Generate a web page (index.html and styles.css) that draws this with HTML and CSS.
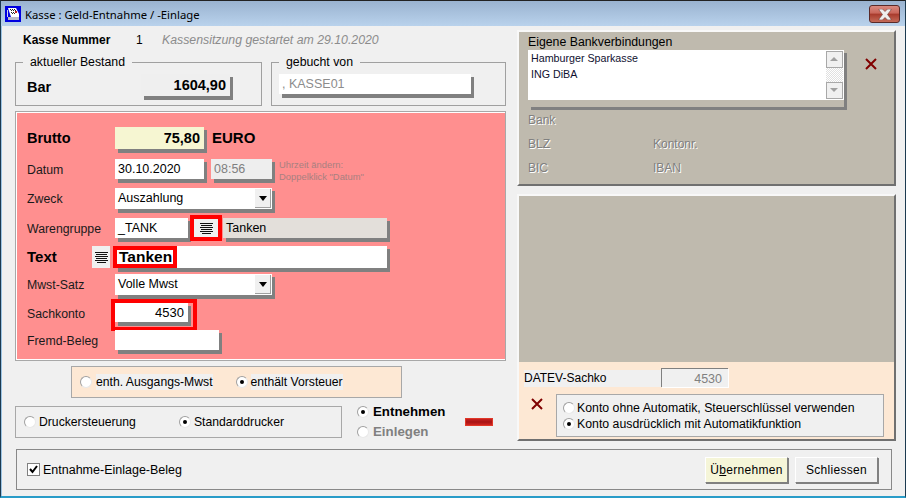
FILE: index.html
```html
<!DOCTYPE html>
<html lang="de">

<head>
    <meta charset="utf-8">
    <title>Kasse : Geld-Entnahme / -Einlage</title>
    <link rel="stylesheet" href="styles.css">
</head>

<body>

    <div class="fenster">

        <header class="titel">
            <svg class="titelicon" width="16" height="16" viewBox="0 0 16 16">
                <rect width="16" height="16" fill="#0000e0" />
                <path d="M3 2h8l3 6v3H6z" fill="#fff" />
                <path d="M5 3h1v1H5zM7 3h1v1H7zM9 3h1v1H9zM6 4h1v1H6zM8 4h1v1H8zM10 4h1v1h-1zM6 6h1v1H6zM8 6h1v1H8zM7 7h1v1H7zM9 7h1v1H9z" fill="#222" />
                <path d="M10 5h2v2h-2z" fill="#c02020" />
                <path d="M3 11h11v3H3z" fill="#b8b8c8" />
                <path d="M2 4h1v7H2z" fill="#d0d0e8" />
            </svg>
            <span>Kasse : Geld-Entnahme / -Einlage</span>
            <div class="schliessenX">
                <svg width="16" height="11" viewBox="0 0 16 11">
                    <path d="M2 0h3.500l2.500 2.500 2.500-2.500h3.500v1l-3.500 4.500 3.500 4.500v1h-3.500l-2.500-2.500-2.500 2.500h-3.500v-1l3.500-4.500-3.500-4.500z" fill="#eee" stroke="#6a3a38" stroke-width=".6" />
                </svg>
            </div>
        </header>

        <main class="inhalt">

            <section class="links">
                <div class="kassezeile">
                    <b class="kassenummer">Kasse Nummer</b>
                    <span class="kassewert">1</span>
                    <i class="sitzung">Kassensitzung gestartet am 29.10.2020</i>
                </div>

                <div class="gruppen">
                    <fieldset class="gruppe bestand">
                        <legend>aktueller Bestand</legend>
                        <b class="barlabel">Bar</b>
                        <div class="felt barfelt">1604,90</div>
                    </fieldset>
                    <fieldset class="gruppe gebucht">
                        <legend>gebucht von</legend>
                        <div class="felt kassefelt">, KASSE01</div>
                    </fieldset>
                </div>

                <div class="rotpanel">
                    <b class="label stor">Brutto</b>
                    <div class="raekke">
                        <div class="felt bruttofelt">75,80</div>
                        <b class="euro">EURO</b>
                    </div>

                    <span class="label">Datum</span>
                    <div class="raekke">
                        <div class="felt datofelt">30.10.2020</div>
                        <div class="felt tidfelt">08:56</div>
                        <div class="hint">Uhrzeit ändern:<br>Doppelklick "Datum"</div>
                    </div>

                    <span class="label">Zweck</span>
                    <div class="raekke">
                        <div class="felt combo"><span>Auszahlung</span><span class="pil"></span></div>
                    </div>

                    <span class="label">Warengruppe</span>
                    <div class="raekke">
                        <div class="felt tankfelt">_TANK</div>
                        <div class="listeknap rodramme">
                            <svg class="linjer" width="13" height="11" viewBox="0 0 13 11"><path d="M0 .5h13M1 2.500h11M0 4.500h13M1 6.500h11M0 8.500h13M2 10.500h9" stroke="#111" /></svg>
                        </div>
                        <div class="felt tankennavn">Tanken</div>
                    </div>

                    <div class="textlabel">
                        <b class="label stor textord">Text</b>
                        <div class="listeknap">
                            <svg class="linjer" width="13" height="11" viewBox="0 0 13 11"><path d="M0 .5h13M1 2.500h11M0 4.500h13M1 6.500h11M0 8.500h13M2 10.500h9" stroke="#111" /></svg>
                        </div>
                    </div>
                    <div class="raekke">
                        <div class="felt textfelt"><b class="rodtekst">Tanken</b></div>
                    </div>

                    <span class="label">Mwst-Satz</span>
                    <div class="raekke">
                        <div class="felt combo"><span>Volle Mwst</span><span class="pil"></span></div>
                    </div>

                    <span class="label">Sachkonto</span>
                    <div class="raekke">
                        <div class="kontoramme">
                            <div class="felt kontofelt">4530</div>
                        </div>
                    </div>

                    <span class="label">Fremd-Beleg</span>
                    <div class="raekke">
                        <div class="felt fremdfelt"></div>
                    </div>
                </div>

                <div class="mwstboks">
                    <label class="valg"><span class="radio"></span><span class="graabg">enth. Ausgangs-Mwst</span></label>
                    <label class="valg tat"><span class="radio valgt"></span><span class="graabg">enthält Vorsteuer</span></label>
                </div>

                <div class="bundraekke">
                    <div class="druckerboks">
                        <label class="valg"><span class="radio"></span>Druckersteuerung</label>
                        <label class="valg"><span class="radio valgt"></span>Standarddrucker</label>
                    </div>
                    <div class="retning">
                        <label class="valg fed"><span class="radio valgt"></span>Entnehmen</label>
                        <label class="valg fed inaktiv"><span class="radio"></span>Einlegen</label>
                    </div>
                    <div class="rodbar"></div>
                </div>
            </section>

            <section class="hojre">
                <div class="bankpanel">
                    <div class="bankoverskrift">Eigene Bankverbindungen</div>
                    <div class="bankliste">
                        <div class="listewrap">
                            <div class="liste">
                                <div class="listetekst">
                                    <div>Hamburger Sparkasse</div>
                                    <div>ING DiBA</div>
                                </div>
                                <div class="scrollbar">
                                    <span class="scrollknap op"></span>
                                    <span class="scrollspor"></span>
                                    <span class="scrollknap ned"></span>
                                </div>
                            </div>
                        </div>
                        <svg class="kryds bankkryds" width="12" height="12" viewBox="0 0 12 12"><path d="M1 1l10 10M11 1L1 11" stroke="#800000" stroke-width="2" /></svg>
                    </div>
                    <div class="bankinfo">
                        <span class="graatekst">Bank</span><span></span>
                        <span class="graatekst">BLZ</span><span class="graatekst">Kontonr.</span>
                        <span class="graatekst">BIC</span><span class="graatekst">IBAN</span>
                    </div>
                </div>

                <div class="datevpanel">
                    <div class="datevtop"></div>
                    <div class="datevbund">
                        <div class="datevraekke">
                            <span class="datevlabel">DATEV-Sachko</span>
                            <div class="datevfelt">4530</div>
                        </div>
                        <div class="automatik">
                            <svg class="kryds" width="12" height="12" viewBox="0 0 12 12"><path d="M1 1l10 10M11 1L1 11" stroke="#800000" stroke-width="2" /></svg>
                            <div class="automatikboks">
                                <label class="valg"><span class="radio"></span>Konto ohne Automatik, Steuerschlüssel verwenden</label>
                                <label class="valg"><span class="radio valgt"></span>Konto ausdrücklich mit Automatikfunktion</label>
                            </div>
                        </div>
                    </div>
                </div>
            </section>

            <footer class="bund">
                <label class="afkryds"><span class="checkboks">
                    <svg width="9" height="9" viewBox="0 0 9 9"><path d="M1 4l2.500 3L8 1" fill="none" stroke="#000" stroke-width="2" /></svg>
                </span>Entnahme-Einlage-Beleg</label>
                <div class="knapper">
                    <button class="knap gul">Ü<u>b</u>ernehmen</button>
                    <button class="knap">Schliessen</button>
                </div>
            </footer>

        </main>
    </div>

</body>

</html>
```

FILE: styles.css
```css
* {
    box-sizing: border-box;
}

body {
    margin: 0;
    background-color: #fff;
    font-family: "Liberation Sans", Arial, sans-serif;
    font-size: 12px;
    color: #000;
    overflow: hidden;
}

.fenster {
    width: 906px;
    height: 498px;
    border: 1px solid #1c3a50;
    border-top-color: #222;
    border-bottom: 2px solid #2a9cc8;
    background-color: #f0f0f0;
    box-shadow: inset 1px 0 0 #9cc4e4;
}

.titel {
    height: 25px;
    display: flex;
    align-items: center;
    padding: 1px 0 0 4px;
    background: linear-gradient(#9ab3d0, #b9d2ec);
    font-family: "Noto Sans", sans-serif;
    font-size: 11.3px;
    color: #000;
}

.titelicon {
    margin-right: 4px;
}

.schliessenX {
    margin-left: auto;
    margin-right: 5px;
    width: 31px;
    height: 18px;
    display: flex;
    align-items: center;
    justify-content: center;
    border: 1px solid #5a2a28;
    border-radius: 3px;
    background: linear-gradient(#d98a80 0, #c9665a 45%, #a83a2c 50%, #c46a58 100%);
}

.inhalt {
    display: grid;
    grid-template-columns: 491px 379px;
    column-gap: 11px;
    padding-left: 14px;
}

/* venstre side */
.kassezeile {
    display: flex;
    align-items: center;
    height: 15px;
    margin-top: 6px;
}

.kassenummer {
    width: 121px;
    padding-left: 8px;
    font-size: 12px;
}

.kassewert {
    width: 26px;
}

.sitzung {
    color: #8c8c8c;
    font-size: 12.3px;
}

.gruppen {
    display: flex;
    gap: 9px;
    margin-top: 8px;
}

.gruppe {
    margin: 0;
    height: 51px;
    padding: 5px 0 0;
    border: 1px solid #a0a0a0;
    display: flex;
    align-items: flex-start;
}

.gruppe legend {
    margin-left: 7px;
    padding: 0 7px;
    font-size: 12.3px;
    line-height: 14px;
}

.bestand {
    width: 247px;
}

.gebucht {
    width: 235px;
}

.barlabel {
    width: 125px;
    padding-left: 11px;
    font-size: 14.5px;
    line-height: 26px;
}

/* gennemsigtig kant giver den lille luft over skyggen */
.felt {
    background-color: #fff;
    background-clip: padding-box;
    border-bottom: 1px solid transparent;
    box-shadow: 3px 3px 0 #808080;
    padding: 0 3px;
    line-height: 20px;
    height: 21px;
    font-size: 12.5px;
}

.barfelt {
    width: 89px;
    height: 23px;
    padding-right: 4px;
    background-color: #efefef;
    text-align: right;
    font-weight: bold;
    font-size: 14.5px;
    line-height: 22px;
}

.kassefelt {
    width: 192px;
    margin-left: 7px;
    color: #8c8c8c;
}

.rotpanel {
    height: 250px;
    margin-top: 5px;
    border: 1px solid #a8a8a8;
    box-shadow: inset 1px 1px 0 #fff, inset 0 -1px 0 #fff;
    background-color: #ff8f8f;
    padding: 15px 0 0 11px;
    display: grid;
    grid-template-columns: 88px 1fr;
    grid-template-rows: 32px 29px 30px 28px 28px 29px 27px auto;
    align-items: start;
}

.label {
    line-height: 23px;
    font-size: 12.3px;
    color: #1a1a1a;
}

.stor {
    font-size: 14.5px;
    line-height: 22px;
    color: #000;
}

.textord {
    font-size: 15px;
}

.raekke {
    display: flex;
    align-items: flex-start;
}

.bruttofelt {
    width: 89px;
    height: 23px;
    padding-right: 4px;
    background-color: #f6f6d2;
    text-align: right;
    font-weight: bold;
    font-size: 14.5px;
    line-height: 22px;
}

.euro {
    margin-left: 8px;
    font-size: 15px;
    line-height: 22px;
}

.datofelt {
    width: 89px;
}

.tidfelt {
    width: 61px;
    margin-left: 7px;
    background-color: #eee;
    color: #808080;
}

.hint {
    margin-left: 7px;
    font-size: 9.4px;
    line-height: 12px;
    color: #a88080;
}

.combo {
    width: 157px;
    height: 22px;
    display: flex;
    justify-content: space-between;
    padding-right: 1px;
}

.pil {
    position: relative;
    width: 16px;
    height: 19px;
    margin-top: 1px;
    background-color: #f0f0f0;
    box-shadow: inset -1px -1px 0 #a0a0a0;
}

.pil::after {
    content: "";
    position: absolute;
    left: 4px;
    top: 7px;
    border: 4px solid transparent;
    border-top: 5px solid #000;
    border-bottom: 0;
}

.tankfelt {
    width: 73px;
}

.listeknap {
    width: 24px;
    height: 20px;
    background-color: #f0f0f0;
    display: flex;
    align-items: center;
    justify-content: center;
}

.rodramme {
    margin: -3px 1px 0 2px;
    width: 32px;
    height: 26px;
    border: 4px solid #f00;
}

.tankennavn {
    width: 164px;
    background-color: #e3dfda;
}

.textlabel {
    display: flex;
    justify-content: space-between;
    padding-right: 5px;
}

.textlabel .listeknap {
    width: 18px;
    height: 22px;
}

.textfelt {
    width: 272px;
    height: 23px;
    line-height: 22px;
    font-size: 15.5px;
    padding: 0;
}

.rodtekst {
    display: inline-block;
    margin-left: -2px;
    width: 64px;
    height: 22px;
    line-height: 14px;
    border: 4px solid #f00;
    padding-left: 2px;
}

.kontoramme {
    margin: -4px 0 0 -4px;
    border: 4px solid #f00;
    padding: 0 5px 4px 0;
}

.kontofelt {
    width: 73px;
    height: 20px;
    line-height: 19px;
    text-align: right;
    padding-right: 4px;
    font-size: 13px;
}

.fremdfelt {
    width: 104px;
}

.mwstboks {
    width: 331px;
    height: 32px;
    margin: 5px 0 0 56px;
    border: 1px solid #a8a8a8;
    background-color: #fde8d4;
    display: flex;
    align-items: center;
    padding-left: 8px;
    gap: 23px;
}

.valg {
    display: flex;
    align-items: center;
    gap: 4px;
    font-size: 12.2px;
}

.tat {
    gap: 3px;
}

.graabg {
    background-color: #f0f0f0;
    padding: 1px 0;
}

.radio {
    position: relative;
    display: inline-block;
    flex: none;
    width: 12px;
    height: 12px;
    border-radius: 50%;
    border: 1px solid #a0a0a0;
    border-right-color: #e8e8e8;
    border-bottom-color: #e8e8e8;
    background-color: #fff;
}

.valgt::after {
    content: "";
    position: absolute;
    left: 3px;
    top: 3px;
    width: 4px;
    height: 4px;
    border-radius: 50%;
    background-color: #000;
}

.bundraekke {
    display: flex;
    margin-top: 8px;
}

.druckerboks {
    width: 327px;
    height: 32px;
    border: 1px solid #a8a8a8;
    display: flex;
    align-items: center;
    padding-left: 8px;
    gap: 43px;
}

.druckerboks .valg {
    gap: 3px;
}

.retning {
    display: flex;
    flex-direction: column;
    margin: -2px 0 0 15px;
    gap: 5px;
}

.fed {
    font-weight: bold;
    font-size: 13.3px;
    gap: 4px;
}

.inaktiv {
    color: #808080;
}

.rodbar {
    width: 28px;
    height: 8px;
    margin: 12px 0 0 20px;
    border: 1px solid #e03828;
    background: linear-gradient(#c82020, #a81414 50%, #d02420);
}

/* hojre side */
.hojre {
    margin-top: 4px;
}

.bankpanel {
    height: 156px;
    background-color: #bfbaae;
    border: 2px solid #f8f8f8;
    border-right-color: #707070;
    border-bottom-color: #707070;
    padding: 3px 0 0 9px;
}

.bankoverskrift {
    line-height: 15px;
    font-size: 12.3px;
}

.bankliste {
    display: flex;
    align-items: flex-start;
}

.listewrap {
    width: 316px;
    height: 57px;
    background-color: #bfbaae;
    box-shadow: 3px 3px 0 #808080;
}

.liste {
    height: 50px;
    background-color: #fff;
    display: flex;
    justify-content: space-between;
    font-size: 10.7px;
}

.listetekst {
    padding: 0 0 0 3px;
    line-height: 16px;
    color: #101030;
}

.scrollbar {
    width: 18px;
    display: flex;
    flex-direction: column;
    padding: 1px 1px 1px 0;
}

.scrollknap {
    position: relative;
    height: 17px;
    border: 1px solid #a8a8a8;
    background-color: #f0f0f0;
}

.scrollknap::after {
    content: "";
    position: absolute;
    left: 3px;
    top: 5px;
    border: 4px solid transparent;
    border-top: 0;
    border-bottom: 4px solid #a0a0a0;
}

.ned::after {
    border-bottom: 0;
    border-top: 4px solid #a0a0a0;
}

.scrollspor {
    flex: 1;
    background: repeating-conic-gradient(#e0e0e0 0 25%, #fff 0 50%) 0 0 / 2px 2px;
}

.bankkryds {
    margin: 8px 0 0 21px;
}

.bankinfo {
    display: grid;
    grid-template-columns: 125px 1fr;
    grid-auto-rows: 24px;
    align-items: center;
    margin-top: 1px;
}

.graatekst {
    color: #808080;
    text-shadow: 1px 1px 0 #fff;
    line-height: 16px;
}

.datevpanel {
    height: 247px;
    margin-top: 8px;
    background-color: #fde8d4;
    border: 2px solid #f8f8f8;
    border-right-color: #707070;
    border-bottom-color: #707070;
    display: flex;
    flex-direction: column;
}

.datevtop {
    height: 166px;
    background-color: #bfbaae;
}

.datevbund {
    flex: 1;
    padding: 6px 0 0 5px;
}

.datevraekke {
    display: flex;
    align-items: center;
    height: 19px;
}

.datevlabel {
    width: 137px;
    height: 17px;
    line-height: 17px;
    background-color: #f0f0f0;
    margin-top: 2px;
}

.datevfelt {
    width: 67px;
    height: 19px;
    line-height: 20px;
    border-top: 1px solid #808080;
    border-left: 1px solid #808080;
    background-color: #f0f0f0;
    color: #808080;
    text-align: right;
    padding-right: 6px;
    font-size: 12.5px;
    box-shadow: 1px 1px 0 #fff;
}

.automatik {
    display: flex;
    margin-top: 7px;
    padding-left: 7px;
    align-items: flex-start;
}

.automatik .kryds {
    margin-top: 4px;
}

.automatikboks {
    width: 328px;
    height: 43px;
    margin-left: 13px;
    border: 1px solid #a8a8a8;
    background-color: #f0f0f0;
    padding: 6px 0 0 6px;
    display: flex;
    flex-direction: column;
    gap: 2px;
}

.automatikboks .valg {
    line-height: 14px;
    gap: 2px;
    font-size: 12.3px;
}

.bund {
    grid-column: 1 / 3;
    width: 876px;
    height: 41px;
    margin: 8px 0 0 1px;
    border: 1px solid #888;
    display: flex;
    justify-content: space-between;
    align-items: center;
    padding: 0 13px 0 10px;
}

.afkryds {
    display: flex;
    align-items: center;
    gap: 3px;
    font-size: 12.5px;
}

.checkboks {
    width: 13px;
    height: 13px;
    background-color: #fff;
    border: 1px solid #808080;
    display: flex;
    align-items: center;
    justify-content: center;
}

.knapper {
    display: flex;
    gap: 7px;
}

.knap {
    width: 83px;
    height: 26px;
    padding: 0;
    font-family: inherit;
    font-size: 12px;
    letter-spacing: .3px;
    background-color: #f0f0f0;
    border: 1px solid;
    border-color: #fff #808080 #808080 #fff;
    box-shadow: 1px 1px 0 #808080;
}

.gul {
    background-color: #f5f5d8;
}
```
